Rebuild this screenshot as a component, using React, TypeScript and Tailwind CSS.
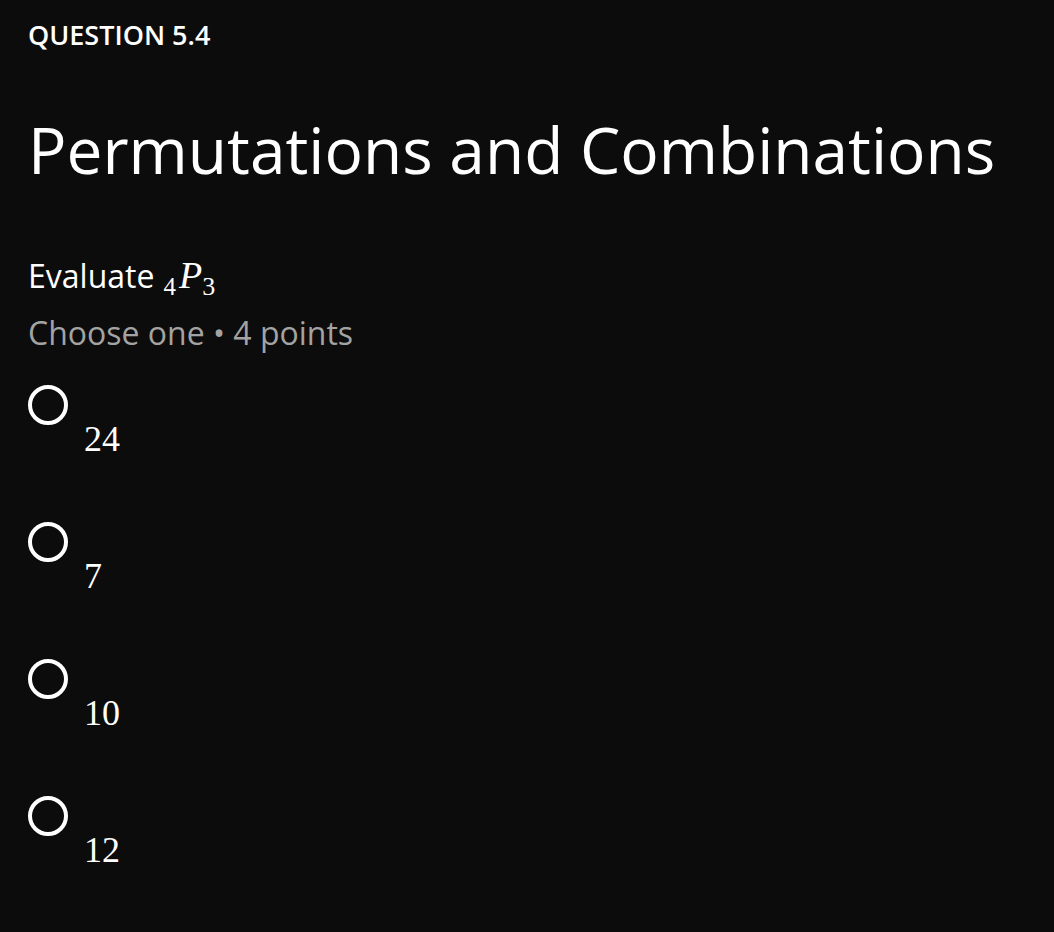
import React from "react";

const options = ["24", "7", "10", "12"];
const serif = { fontFamily: '"Liberation Serif", "DejaVu Serif", serif' };

export default function App() {
  return (
    <div
      className="min-h-[932px] w-full bg-[#0c0c0c] text-white px-[28px] pt-[17px]"
      style={{ fontFamily: '"Open Sans", "Noto Sans", sans-serif' }}
    >
      <div className="text-[27px] font-semibold leading-[36px]">QUESTION 5.4</div>
      <h1 className="mt-[61px] text-[64px] font-normal leading-[72px]">Permutations and Combinations</h1>
      <div className="mt-[70px] text-[32px] leading-[40px] whitespace-nowrap">
        <span>Evaluate</span>
        <span className="ml-[9px]" style={serif}>
          <span className="relative top-[7px] text-[25px] leading-none">4</span>
          <span className="ml-[3px] italic text-[38px] leading-none">P</span>
          <span className="relative top-[7px] text-[26px] leading-none">3</span>
        </span>
      </div>
      <div className="mt-[16px] text-[32px] leading-[40px] text-[#a3a3a3]">Choose one • 4 points</div>
      <div className="mt-[32px] flex flex-col gap-[63px]">
        {options.map((o) => (
          <div key={o} className="flex items-start">
            <div className="w-[40px] h-[40px] rounded-full border-[4px] border-white shrink-0" />
            <div className="ml-[16px] mt-[34px] text-[36px] leading-[40px]" style={serif}>
              {o}
            </div>
          </div>
        ))}
      </div>
    </div>
  );
}
